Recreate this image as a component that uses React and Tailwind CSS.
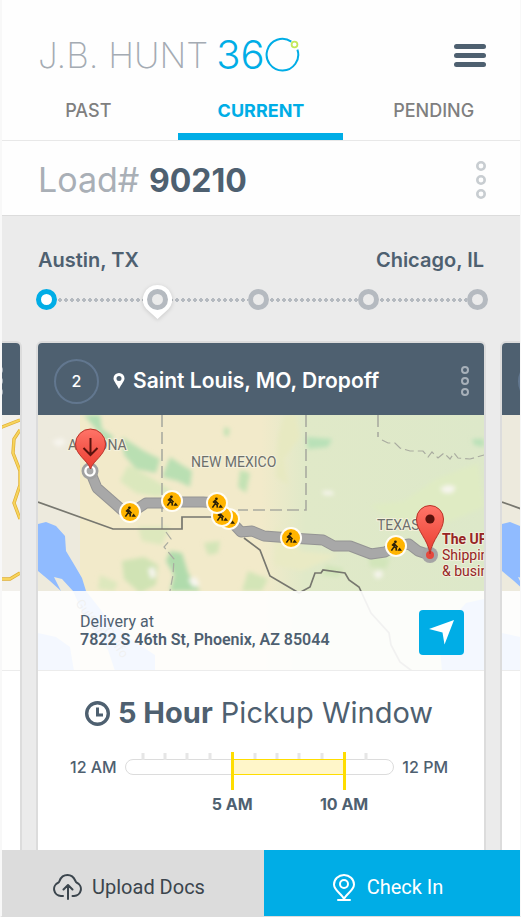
import React from 'react';
import clsx from 'clsx';

const tabs = [
  { label: 'PAST', active: false },
  { label: 'CURRENT', active: true },
  { label: 'PENDING', active: false },
];

const stops = [
  { id: 1, line: '', done: true },
  { id: 2, line: 'grow-[112]', current: true },
  { id: 3, line: 'grow-[100]' },
  { id: 4, line: 'grow-[110]' },
  { id: 5, line: 'grow-[110]' },
];

const roadWorks = [
  [92, 97],
  [134, 86],
  [191, 104],
  [184, 101],
  [179, 88],
  [253, 123],
  [358, 131],
];

const ROUTE =
  'M52 56 L59 73 L84 95 L93 98 L108 88 L124 88 L134 87 L165 87 L180 88 L190 103 L203 117 L214 116 L226 121 L253 123 L285 125 L296 131 L312 131 L333 139 L347 137 L358 131 L371 129 L380 136 L392 140';

const DotsLarge = () => (
  <svg width="12" height="40" viewBox="0 0 12 40" fill="none" stroke="currentColor" strokeWidth="2.6">
    <circle cx="6" cy="6" r="3.7" />
    <circle cx="6" cy="20" r="3.7" />
    <circle cx="6" cy="34" r="3.7" />
  </svg>
);

const DotsSmall = () => (
  <svg width="10" height="32" viewBox="0 0 10 32" fill="none" stroke="currentColor" strokeWidth="2">
    <circle cx="5" cy="5" r="3" />
    <circle cx="5" cy="16" r="3" />
    <circle cx="5" cy="27" r="3" />
  </svg>
);

const Logo = () => (
  <h1 aria-label="J.B. Hunt 360" className="flex items-center gap-2 leading-10">
    <span className="text-[35px] font-extralight text-[#a4abb3]">J.B. HUNT</span>
    <span className="flex items-center text-[#00ade6]">
      <span className="text-[40px] font-light">36</span>
      <svg width="36" height="36" viewBox="0 0 36 36" fill="none">
        <path d="M26.3 4.6 A15.8 15.8 0 1 0 32.4 12.6" stroke="currentColor" strokeWidth="2" />
        <circle cx="29.5" cy="7.5" r="2.9" stroke="#c4e85a" strokeWidth="1.8" />
      </svg>
    </span>
  </h1>
);

const RoadWork = ({ x, y }) => (
  <g transform={`translate(${x} ${y})`}>
    <circle r="11" fill="#fffdf5" />
    <circle r="9" fill="#ffb400" />
    <circle cx="-0.6" cy="-4.2" r="1.4" fill="#2b2108" />
    <path d="M-1.5 -3 L-4 -0.5 M-1.5 -3 L-1.8 0.6 L0.2 2.2 L0.3 4.6 M-1.8 0.6 L-4.6 4.6 M-2 -2.4 L1.6 1.2" stroke="#2b2108" strokeWidth="1.6" fill="none" />
    <path d="M1.4 4.8 L3.6 1.6 L6 4.8 Z" fill="#2b2108" />
  </g>
);

const RouteMap = () => (
  <svg className="absolute inset-0 h-full w-full" viewBox="0 0 446 256" preserveAspectRatio="xMidYMid slice" fontFamily="Roboto, sans-serif">
    <defs>
      <linearGradient id="land">
        <stop offset="0.5" stopColor="#f2eaca" />
        <stop offset="0.6" stopColor="#e0e9c8" />
        <stop offset="1" stopColor="#dde8c9" />
      </linearGradient>
      <linearGradient id="pin" x2="0" y2="1">
        <stop offset="0" stopColor="#ff7468" />
        <stop offset="1" stopColor="#ea3d30" />
      </linearGradient>
      <filter id="soft">
        <feGaussianBlur stdDeviation="2" />
      </filter>
    </defs>
    <rect width="446" height="256" fill="url(#land)" />
    <rect width="42" height="256" fill="#edeadd" />

    {/* terrain */}
    <g filter="url(#soft)">
      <path d="M46 0 H62 L64 14 L76 22 L68 28 L58 14 Z" fill="#b5dfb3" />
      <path d="M84 22 L106 36 L122 44 L118 58 L98 54 L86 40 Z M132 42 L144 50 L154 56 L152 72 L140 66 L124 62 Z" fill="#b9dfb2" />
      <path d="M90 50 L112 62 L134 76 L120 82 L98 78 L82 66 Z" fill="#dbe8bd" />
      <path d="M202 55 L212 58 L208 78 L200 72 Z M186 12 L192 14 L190 22 L186 20 Z" fill="#c3e2b4" />
      <path d="M84 146 L106 142 L120 150 L118 170 L102 178 L86 164 Z" fill="#d0e3b4" />
      <path d="M132 136 L144 138 L150 158 L162 176 H132 L136 160 L128 146 Z" fill="#b0dbac" />
      <path d="M100 112 L132 112 L124 130 L104 126 Z M62 160 L80 168 L76 176 L60 174 Z" fill="#dde8bd" />
      <path d="M166 128 L182 126 L180 138 L170 140 Z M210 156 L230 164 L224 176 H204 Z" fill="#d3e5b7" />
      <path d="M246 0 L258 0 L262 22 L246 44 L250 70 L238 62 L240 22 Z" fill="#e7e9c1" />
      <path d="M268 22 L294 24 L290 32 L270 34 Z M434 24 H446 V32 L436 30 Z" fill="#b9e1b8" />
      <path d="M238 110 L262 136 L300 140 L264 156 L236 150 Z" fill="#e9eac4" />
      <path d="M332 90 L366 86 L398 64 L440 48 L446 92 L408 108 L360 110 Z" fill="#dfebc3" />
      <path d="M330 138 L352 144 L348 154 L332 152 Z M288 150 L306 154 L300 162 L284 160 Z" fill="#d2e5ba" />
      <path d="M110 154 l6 -2 l2 9 l-5 3 Z M150 164 l8 -2 l4 8 l-7 2 Z M284 76 l10 0 l2 4 l-10 0 Z M402 73 l8 -3 l8 2 l-4 6 l-8 0 Z M335 158 l8 -3 l2 6 l-6 3 Z M14 26 l10 -3 l4 5 l-8 4 Z" fill="#f7f5ee" />
    </g>

    {/* water */}
    <path d="M0 109 L8 107 L18 111 L27 121 L28 136 L37 151 L44 163 L48 176 L66 199 L94 225 L117 240 V256 H77 L70 235 L55 214 L44 196 L35 176 L24 164 L16 162 L23 176 L12 166 L0 156 Z" fill="#90bbff" />
    <path d="M0 218 L18 222 L32 232 L36 256 H0 Z M400 212 L414 204 L428 188 L446 184 V256 H404 Z" fill="#90bbff" />
    <text transform="translate(37 188) rotate(56)" fontSize="13" fill="#6d7074">Gulf of</text>
    <text transform="translate(65 216) rotate(56)" fontSize="13" fill="#6d7074">Califo</text>

    {/* state and country borders */}
    <path d="M124 0 V114 M268 0 V95 H200 M340 0 V22" fill="none" stroke="#a9aba0" strokeWidth="1.6" strokeDasharray="12 5" />
    <path d="M344 25 L350 28 L357 28 L362 33 L372 36 L385 36 L390 42 L394 37 L400 43 L406 38 L412 44 L416 38 L420 43 L432 44 L446 40 M128 117 L133 124 L126 132 L136 144 L135 160 L132 176" fill="none" stroke="#a9aba0" strokeWidth="1.2" strokeDasharray="9 4" />
    <path d="M0 87 L75 114 H144 V102 H176 M206 123 L222 135 L232 161 L261 178 L272 172 L277 158 L283 158 L285 155 L307 158 L311 165 L321 172 L333 198 L351 218 L353 230 L362 247 L374 256" fill="none" stroke="#77776f" strokeWidth="1.7" />

    <g fontSize="14" fill="#6d6f6b" stroke="#f4f1dc" strokeWidth="2" paintOrder="stroke">
      <text x="30" y="35">ARIZONA</text>
      <text x="153" y="52">NEW MEXICO</text>
      <text x="339" y="115">TEXAS</text>
    </g>

    <path d={ROUTE} fill="none" stroke="#949494" strokeWidth="11" strokeLinejoin="round" />
    <path d={ROUTE} fill="none" stroke="#a8a8a8" strokeWidth="9" strokeLinejoin="round" />
    <circle cx="52" cy="56" r="7" fill="#a8a8a8" stroke="#a0a0a0" strokeWidth="3" />
    <circle cx="52" cy="56" r="4.6" fill="none" stroke="#fff" strokeWidth="2.4" />
    <circle cx="392" cy="140" r="8" fill="#a5a5a5" />
    <circle cx="392" cy="140" r="4" fill="#e5493d" />

    {roadWorks.map(([x, y]) => (
      <RoadWork key={`${x}-${y}`} x={x} y={y} />
    ))}

    {/* origin pin */}
    <path d="M52.500 54 C49.500 45 37.500 40 37.500 29 A15 15 0 0 1 67.500 29 C67.500 40 55.500 45 52.500 54 Z" fill="url(#pin)" stroke="#b93228" strokeWidth="1" />
    <path d="M52.500 23 V40 M45.500 33 L52.500 40 L59.500 33" fill="none" stroke="#5a120d" strokeWidth="2" />

    {/* destination pin */}
    <path d="M392 139 C390 124 378.500 116 378.500 104 A13.500 13.500 0 0 1 405.500 104 C405.500 116 394 124 392 139 Z" fill="url(#pin)" stroke="#b93228" strokeWidth="1" />
    <circle cx="392" cy="104" r="4.600" fill="#5a120d" />

    <g fontSize="14" fill="#962424" stroke="#f1efdc" strokeWidth="2" paintOrder="stroke">
      <text x="404" y="129" fontWeight="700">The UPS</text>
      <text x="404" y="145">Shipping</text>
      <text x="404" y="161">&amp; business</text>
    </g>
  </svg>
);

const PreviousMap = () => (
  <svg className="absolute inset-0 h-full w-full" viewBox="0 0 446 256" preserveAspectRatio="xMaxYMid slice">
    <rect width="446" height="256" fill="#f2f0eb" />
    <path d="M400 24 L428 12 L446 5 M446 15 L440 24 L439 38 L446 56 V70 L440 88 L446 104 M400 164 H436 L446 158" fill="none" stroke="#dfae35" strokeWidth="3.4" />
    <path d="M400 24 L428 12 L446 5 M446 15 L440 24 L439 38 L446 56 V70 L440 88 L446 104 M400 164 H436 L446 158" fill="none" stroke="#f7d45c" strokeWidth="2" />
  </svg>
);

const NextMap = () => (
  <svg className="absolute inset-0 h-full w-full" viewBox="0 0 446 256" preserveAspectRatio="xMinYMid slice">
    <rect width="446" height="256" fill="#edeadd" />
    <path d="M0 109 L8 107 L18 111 L27 121 L28 136 L37 151 L44 163 L48 176 L66 199 V256 H55 L44 196 L35 176 L24 164 L16 162 L23 176 L12 166 L0 156 Z M0 218 L18 222 L32 232 L36 256 H0 Z" fill="#90bbff" />
    <path d="M0 87 L75 114" stroke="#77776f" strokeWidth="1.7" />
  </svg>
);

const PickupWindow = ({ from, to }) => {
  // the hour scale starts a little before the rounded end of the track
  const pos = (hour) => `${((hour * 22.5 - 5.5) / 269) * 100}%`;
  const ticks = [1, 2, 3, 4, 6, 7, 8, 9, 11];

  return (
    <div className="flex gap-2 pt-5 pr-9 pl-8 text-base leading-6 font-medium text-[#4e6070]">
      <span className="pt-1">12 AM</span>
      <div className="relative mt-2 h-4 flex-1 rounded-full border border-[#dcdcdc]">
        {ticks.map((hour) => (
          <span key={hour} className="absolute bottom-full h-[7px] w-[3px] -translate-x-1/2 bg-[#e6e6e6]" style={{ left: pos(hour) }} />
        ))}
        <span
          className="absolute -inset-y-px border border-[#fedd00] bg-[#fff6c9]"
          style={{ left: pos(from), right: `calc(100% - ${pos(to)})` }}
        />
        {[from, to].map((hour) => (
          <span key={hour} className="absolute -top-2 flex w-16 -translate-x-1/2 flex-col items-center gap-0.5" style={{ left: pos(hour) }}>
            <span className="h-[38px] w-[3px] bg-[#fedd00]" />
            <span className="font-bold whitespace-nowrap">{hour} AM</span>
          </span>
        ))}
      </div>
      <span className="pt-1">12 PM</span>
    </div>
  );
};

const CardFrame = ({ children, ...props }) => (
  <article
    className="flex w-[calc(100%-68px)] shrink-0 flex-col overflow-hidden rounded-t-md border-2 border-b-0 border-[#dcdcdc] bg-white"
    {...props}
  >
    {children}
  </article>
);

// neighbouring stop, only its edge is seen beside the open card
const PeekCard = ({ children }) => (
  <CardFrame aria-hidden="true">
    <div className="flex h-[72px] items-center justify-between bg-[#4e6070] px-4 pt-1 text-[#a7b0b9]">
      <span className="size-[45px] rounded-full border-2 border-[#62778f]" />
      <DotsSmall />
    </div>
    <div className="relative h-64 overflow-hidden">
      {children}
      <div className="absolute inset-x-0 bottom-0 h-20 border-b border-[#ececec] bg-white/90" />
    </div>
  </CardFrame>
);

const StopCard = ({ number, title }) => (
  <CardFrame>
    <header className="flex h-[72px] items-center bg-[#4e6070] pt-1 pr-3.5 pl-4 text-white">
      <span className="flex size-[45px] items-center justify-center rounded-full border-2 border-[#62778f] text-base font-medium">{number}</span>
      <svg className="mr-2 ml-3.5" width="12" height="16" viewBox="0 0 12 16">
        <path fill="#fff" fillRule="evenodd" d="M6 0 A5.500 5.500 0 0 1 11.500 5.500 C11.500 8 8.500 11 6 16 C3.500 11 0.500 8 0.500 5.500 A5.500 5.500 0 0 1 6 0 Z M6 3 A2.500 2.500 0 1 0 6 8 A2.500 2.500 0 1 0 6 3 Z" />
      </svg>
      <h3 className="flex-1 text-[21px] font-semibold">{title}</h3>
      <button type="button" aria-label="Stop options" className="text-[#a7b0b9]">
        <DotsSmall />
      </button>
    </header>
    <div className="relative h-64 overflow-hidden">
      <RouteMap />
      <div className="absolute inset-x-0 bottom-0 flex h-20 items-center justify-between border-b border-[#ececec] bg-white/90 pr-5 pl-[42px] font-[Roboto,sans-serif] text-base leading-[18px] text-[#4e6070]">
        <p>
          Delivery at
          <br />
          <span className="font-semibold">7822 S 46th St, Phoenix, AZ 85044</span>
        </p>
        <button type="button" aria-label="Navigate" className="mt-1 flex size-[45px] items-center justify-center rounded-sm bg-[#00ade6]">
          <svg width="25" height="25" viewBox="0 0 25 25" fill="#fff">
            <path d="M25 0 L15.500 24.500 L13.500 12.500 L0 9 Z" />
          </svg>
        </button>
      </div>
    </div>
    <h2 className="flex items-center justify-center gap-2 pt-6 pr-1 text-[29px] leading-9 text-[#4e6070]">
      <svg width="25" height="25" viewBox="0 0 25 25" fill="none" stroke="currentColor">
        <circle cx="12.500" cy="12.500" r="10.800" strokeWidth="3.400" />
        <path d="M12.500 6.500 V14 H18" strokeWidth="3" />
      </svg>
      <span>
        <strong className="font-bold">5 Hour</strong> Pickup Window
      </span>
    </h2>
    <PickupWindow from={5} to={10} />
  </CardFrame>
);

const StopMarker = ({ done, current }) => (
  <span className="relative flex size-[21px] shrink-0 items-center justify-center">
    {current && (
      <svg className="absolute -top-1 -left-1 drop-shadow-sm" width="29" height="36" viewBox="0 0 29 36">
        <path d="M14.500 0 A14.500 14.500 0 0 1 25.500 24 L14.500 34 L3.500 24 A14.500 14.500 0 0 1 14.500 0 Z" fill="#fff" />
      </svg>
    )}
    <span
      className={clsx(
        'relative size-[21px] rounded-full border-[5px]',
        done ? 'border-[#00ade6] bg-white' : 'border-[#b5bac0] bg-[#ebebeb]'
      )}
    />
  </span>
);

export default function App() {
  return (
    <div className="flex min-h-screen flex-col overflow-hidden border-r border-b border-l-2 border-r-[#f8f8f8] border-b-[#dcdcdc] border-l-[#f8f8f8] bg-[#fefefe] font-[Inter,sans-serif]">
      <header className="border-b border-[#e8e8e8]">
        <div className="flex items-center justify-between pt-[35px] pr-[34px] pl-9">
          <Logo />
          <button type="button" aria-label="Menu" className="flex w-8 flex-col gap-1">
            <span className="h-[5px] rounded-full bg-[#4e6070]" />
            <span className="h-[5px] rounded-full bg-[#4e6070]" />
            <span className="h-[5px] rounded-full bg-[#4e6070]" />
          </button>
        </div>
        <nav className="grid grid-cols-3 pt-6">
          {tabs.map((tab) => (
            <button
              key={tab.label}
              type="button"
              className={clsx(
                'flex flex-col items-center gap-2.5 text-lg leading-6',
                tab.active ? 'font-bold text-[#00ade6]' : 'font-medium text-[#7f7f7f]'
              )}
            >
              {tab.label}
              <span className={clsx('h-[7px] w-[165px]', tab.active && 'bg-[#00ade6]')} />
            </button>
          ))}
        </nav>
      </header>

      <section className="flex h-[75px] items-center justify-between border-b border-[#dcdcdc] pt-1 pr-[33px] pl-9">
        <h2 className="text-[34px] leading-10 text-[#a9afb6]">
          Load# <strong className="text-[32px] font-bold text-[#4e6070]">90210</strong>
        </h2>
        <button type="button" aria-label="Load options" className="text-[#c8cdd1]">
          <DotsLarge />
        </button>
      </section>

      <main className="flex flex-1 flex-col bg-[#ebebeb]">
        <div className="flex justify-between px-9 pt-[30px] text-xl leading-7 font-semibold text-[#4e6070]">
          <span>Austin, TX</span>
          <span>Chicago, IL</span>
        </div>
        <div className="flex items-center pt-[15px] pr-8 pl-[34px]">
          {stops.map((stop) => (
            <React.Fragment key={stop.id}>
              {stop.id > 1 && (
                <span className={clsx('h-1 basis-0 bg-[radial-gradient(circle,#b5bac0_2px,transparent_2px)] bg-size-[6px_4px]', stop.line)} />
              )}
              <StopMarker done={stop.done} current={stop.current} />
            </React.Fragment>
          ))}
        </div>

        <div className="flex flex-1 justify-center gap-3.5 pt-[31px]">
          <PeekCard>
            <PreviousMap />
          </PeekCard>
          <StopCard number={2} title="Saint Louis, MO, Dropoff" />
          <PeekCard>
            <NextMap />
          </PeekCard>
        </div>
      </main>

      <footer className="grid h-[66px] grid-cols-[131fr_128fr] font-[Roboto,sans-serif] text-xl">
        <button type="button" className="flex items-center justify-center gap-2.5 bg-[#dcdcdc] pt-2 pr-2 text-[#3b454d]">
          <svg width="29" height="26" viewBox="0 0 29 26" fill="none" stroke="currentColor" strokeWidth="2" strokeLinecap="round" strokeLinejoin="round">
            <path d="M10 22 H8 A7 7 0 0 1 5.500 8.500 C7 8 6.500 1 14.500 1 C22 1 22 8 23.500 8.500 A7 7 0 0 1 21 22 H19.500 M15 25 V11.500 M10.500 15.500 L15 11 L19.500 15.500" />
          </svg>
          Upload Docs
        </button>
        <button type="button" className="flex items-center justify-center gap-3 bg-[#00ade6] pt-2 pr-2 text-white">
          <svg width="22" height="27" viewBox="0 0 22 27" fill="none" stroke="currentColor" strokeWidth="2" strokeLinecap="round" strokeLinejoin="round">
            <path d="M11 25 C9 20 1 16.500 1 10.500 A10 9.500 0 0 1 21 10.500 C21 16.500 13 20 11 25 Z M5 26 H17" />
            <circle cx="11" cy="10" r="4" />
          </svg>
          Check In
        </button>
      </footer>
    </div>
  );
}
